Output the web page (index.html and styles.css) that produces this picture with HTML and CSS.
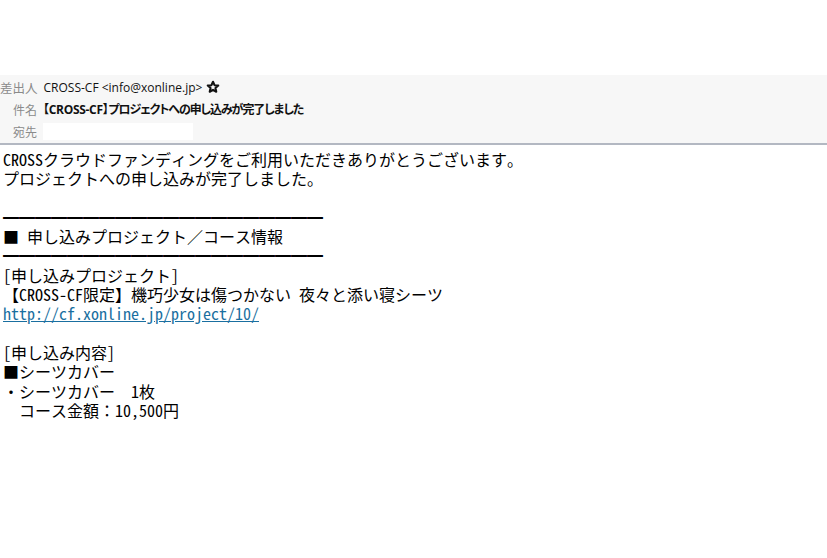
FILE: index.html
```html
<!DOCTYPE html>
<html lang="ja">
<head>
<meta charset="utf-8">
<link rel="stylesheet" href="styles.css">
</head>
<body>
<div class="page">
  <div class="header">
    <div class="row">
      <span class="label wide">差出人</span>
      <span class="value">CROSS-CF &lt;info@xonline.jp&gt;</span>
      <svg class="star" viewBox="0 0 24 24" width="14" height="14"><path d="M12 3l2.6 5.9 6.4.6-4.8 4.3 1.4 6.3L12 16.8l-5.6 3.3 1.4-6.3L3 9.5l6.4-.6z" fill="none" stroke="#111" stroke-width="3.6" stroke-linejoin="round"/></svg>
    </div>
    <div class="row">
      <span class="label">件名</span>
      <span class="value subject">【CROSS-CF】<span class="subject-jp">プロジェクトへの申し込みが完了しました</span></span>
    </div>
    <div class="row">
      <span class="label">宛先</span>
      <span class="redact"></span>
    </div>
  </div>
  <div class="body">
    <div class="line">CROSSクラウドファンディングをご利用いただきありがとうございます。</div>
    <div class="line">プロジェクトへの申し込みが完了しました。</div>
    <div class="line blank"></div>
    <div class="line rule">━━━━━━━━━━━━━━━━━━━━</div>
    <div class="line">■ 申し込みプロジェクト／コース情報</div>
    <div class="line rule">━━━━━━━━━━━━━━━━━━━━</div>
    <div class="line">[申し込みプロジェクト]</div>
    <div class="line">【CROSS-CF限定】機巧少女は傷つかない 夜々と添い寝シーツ</div>
    <div class="line"><a class="link" href="#">http://cf.xonline.jp/project/10/</a></div>
    <div class="line blank"></div>
    <div class="line">[申し込み内容]</div>
    <div class="line">■シーツカバー</div>
    <div class="line">・シーツカバー　1枚</div>
    <div class="line">　コース金額：10,500円</div>
  </div>
</div>
</body>
</html>
```

FILE: styles.css
```css
html, body {
  margin: 0;
  padding: 0;
  background: #ffffff;
}
.page {
  padding-top: 75px;
}
.header {
  background: #f7f7f7;
  border-bottom: 2px solid #b3b8c2;
  padding: 1px 0 1px 0;
  font-family: "Open Sans", "Noto Sans CJK JP", sans-serif;
  font-size: 12px;
  color: #111;
}
.row {
  display: flex;
  align-items: center;
  height: 22px;
}
.label {
  width: 37px;
  text-align: right;
  color: #8a8a8a;
  font-family: "Noto Sans CJK JP", sans-serif;
  font-size: 12px;
  margin-right: 6px;
  flex: none;
  white-space: nowrap;
}
.label.wide {
  text-align: left;
  font-size: 12.5px;
  width: auto;
}
.value {
  white-space: nowrap;
}
.subject {
  font-weight: bold;
  font-family: "Open Sans", "Noto Sans CJK JP", sans-serif;
  font-feature-settings: "palt";
  letter-spacing: -0.3px;
}
.subject-jp {
  letter-spacing: -1.1px;
}
.star {
  margin-left: 4px;
  display: block;
}
.redact {
  display: block;
  width: 150px;
  height: 17px;
  background: #ffffff;
}
.body {
  padding: 5px 0 0 3px;
  font-family: "Noto Sans Mono CJK JP", "Noto Sans CJK JP", monospace;
  font-size: 16px;
  color: #000;
}
.line {
  height: 19.3px;
  line-height: 19.3px;
  white-space: pre;
}
.rule {
  font-weight: bold;
}
.link {
  color: #1a6fa0;
  text-decoration: underline;
}
```
